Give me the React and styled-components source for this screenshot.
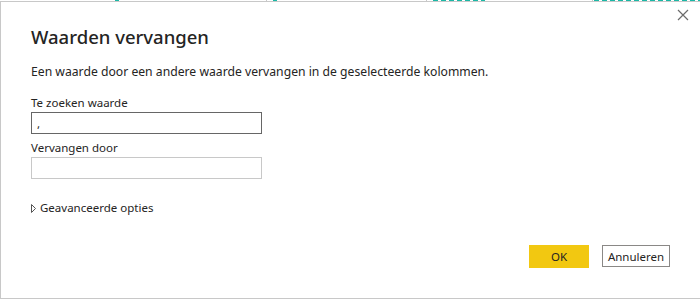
import React from "react";
import styled, { createGlobalStyle } from "styled-components";

const GlobalStyle = createGlobalStyle`
  html, body {
    margin: 0;
    padding: 0;
    background: #ffffff;
  }
  body {
    font-family: "Segoe UI", "Noto Sans", "Open Sans", sans-serif;
    color: #252423;
  }
`;

const Page = styled.div`
  width: 700px;
  height: 299px;
  overflow: hidden;
  display: flex;
  flex-direction: column;
`;

const Canvas = styled.div`
  height: 1px;
  display: flex;
  flex-shrink: 0;
`;

const Mark = styled.span`
  width: ${(p) => p.w}px;
  margin-left: ${(p) => p.at}px;
  height: 1px;
  background: ${(p) =>
    p.dashed
      ? "repeating-linear-gradient(90deg, #1ab8a6 0 5px, transparent 5px 8px)"
      : p.color};
`;

const Dialog = styled.div`
  position: relative;
  height: 296px;
  border-top: 1px solid #c8c8c8;
  border-left: 1px solid #c8c8c8;
  border-bottom: 1px solid #c8c8c8;
  background: #ffffff;
  padding: 21px 30px 0 30px;
  display: flex;
  flex-direction: column;
`;

const Close = styled.button`
  position: absolute;
  top: 7px;
  right: 11px;
  width: 12px;
  height: 12px;
  padding: 0;
  border: none;
  background: none;
  display: flex;
`;

const Title = styled.h1`
  margin: 0;
  font-size: 18.5px;
  font-weight: 500;
  line-height: 27px;
  color: #252423;
`;

const Description = styled.p`
  margin: 13px 0 0 0;
  font-size: 12.2px;
  line-height: 18px;
  color: #252423;
`;

const Field = styled.div`
  display: flex;
  flex-direction: column;
  margin-top: ${(p) => p.gap}px;
`;

const Label = styled.label`
  font-size: 11.5px;
  line-height: 16px;
  color: #252423;
`;

const Input = styled.input`
  box-sizing: border-box;
  width: 231px;
  height: 22px;
  margin-top: 1px;
  padding: 0 5px;
  border: 1px solid ${(p) => (p.focused ? "#666666" : "#c8c8c8")};
  font-family: inherit;
  font-size: 11.5px;
  color: #252423;
  outline: none;
`;

const Advanced = styled.div`
  display: flex;
  align-items: center;
  gap: 4px;
  margin-top: 21px;
  font-size: 11.5px;
  line-height: 16px;
  color: #252423;
`;

const Footer = styled.div`
  display: flex;
  justify-content: flex-end;
  align-items: flex-start;
  gap: 13px;
  margin-top: 29px;
`;

const Button = styled.button`
  box-sizing: border-box;
  height: ${(p) => (p.primary ? 23 : 22)}px;
  width: ${(p) => (p.primary ? 60 : 68)}px;
  padding: 0;
  font-family: inherit;
  font-size: 11.5px;
  color: #252423;
  background: ${(p) => (p.primary ? "#f2c811" : "#ffffff")};
  border: 1px solid ${(p) => (p.primary ? "#f2c811" : "#8a8886")};
`;

export default function App() {
  return (
    <Page>
      <GlobalStyle />
      <Canvas>
        <Mark at={115} w={4} color="#1ab8a6" />
        <Mark at={147} w={1} color="#c8c8c8" />
        <Mark at={6} w={4} color="#1ab8a6" />
        <Mark at={149} w={1} color="#c8c8c8" />
        <Mark at={6} w={53} dashed />
        <Mark at={107} w={1} color="#c8c8c8" />
        <Mark at={1} w={107} dashed />
      </Canvas>
      <Dialog>
        <Close aria-label="Sluiten">
          <svg width="12" height="12" viewBox="0 0 12 12">
            <path d="M1 1L11 11M11 1L1 11" stroke="#6b6b6b" strokeWidth="1.2" fill="none" />
          </svg>
        </Close>
        <Title>Waarden vervangen</Title>
        <Description>
          Een waarde door een andere waarde vervangen in de geselecteerde kolommen.
        </Description>
        <Field gap={14}>
          <Label>Te zoeken waarde</Label>
          <Input focused defaultValue="," />
        </Field>
        <Field gap={6}>
          <Label>Vervangen door</Label>
          <Input />
        </Field>
        <Advanced>
          <svg width="5" height="9" viewBox="0 0 5 9">
            <path d="M0.5 0.5L4.5 4.5L0.5 8.5Z" stroke="#555" strokeWidth="1" fill="none" />
          </svg>
          Geavanceerde opties
        </Advanced>
        <Footer>
          <Button primary>OK</Button>
          <Button>Annuleren</Button>
        </Footer>
      </Dialog>
    </Page>
  );
}
